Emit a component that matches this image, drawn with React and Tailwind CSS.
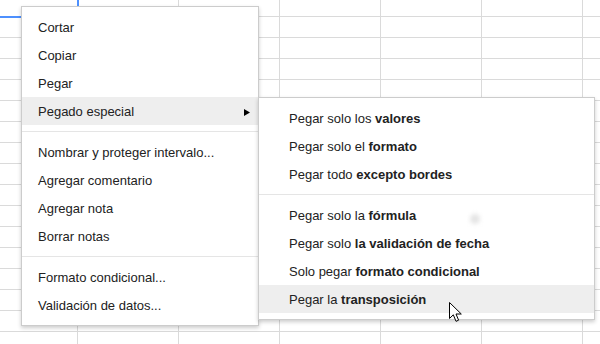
import React from "react";

const rows = 17;
const cols = 7;

function Grid() {
  const rowHeights = Array.from({ length: rows }, (_, i) => (i === 0 ? "h-[17px]" : "h-[21px]"));
  return (
    <div className="flex flex-col">
      {rowHeights.map((h, r) => (
        <div key={r} className={`flex ${h}`}>
          {Array.from({ length: cols }, (_, c) => (
            <div
              key={c}
              className={`${c === 0 ? "w-[78px]" : "w-[101px]"} shrink-0 h-full border-r border-b border-[#dadada]`}
            />
          ))}
        </div>
      ))}
    </div>
  );
}

function Item({ children, active, arrow, pl = "pl-[16px]" }) {
  return (
    <div
      className={`relative h-[28px] flex items-center pt-[2px] ${pl} ${active ? "bg-[#eeeeee]" : ""}`}
    >
      <span>{children}</span>
      {arrow && (
        <svg className="absolute right-[8px] top-[12px]" width="6" height="7" viewBox="0 0 6 7">
          <polygon points="0,0 6,3.5 0,7" fill="#000" />
        </svg>
      )}
    </div>
  );
}

function Sep() {
  return <div className="my-[6px] border-t border-[#e5e5e5]" />;
}

export default function App() {
  return (
    <div
      className="relative w-[600px] h-[344px] overflow-hidden bg-white text-[13px] text-[#222222]"
      style={{ fontFamily: '"Liberation Sans", Arial, sans-serif' }}
    >
      <Grid />
      <div className="absolute left-0 top-0 w-[79px] h-[18px] border-r-2 border-b-2 border-[#4d90fe]" />

      {/* main context menu */}
      <div className="absolute left-[21px] top-[6px] w-[238px] py-[6px] bg-white border border-[#cccccc] shadow-[0_2px_4px_rgba(0,0,0,0.2)]">
        <Item>Cortar</Item>
        <Item>Copiar</Item>
        <Item>Pegar</Item>
        <Item active arrow>Pegado especial</Item>
        <Sep />
        <Item>Nombrar y proteger intervalo...</Item>
        <Item>Agregar comentario</Item>
        <Item>Agregar nota</Item>
        <Item>Borrar notas</Item>
        <Sep />
        <Item>Formato condicional...</Item>
        <Item>Validación de datos...</Item>
      </div>

      {/* submenu */}
      <div className="absolute left-[258px] top-[97px] w-[337px] py-[6px] bg-white border border-[#cccccc] shadow-[0_2px_4px_rgba(0,0,0,0.2)]">
        <Item pl="pl-[30px]">Pegar solo los <b className="font-bold">valores</b></Item>
        <Item pl="pl-[30px]">Pegar solo el <b className="font-bold">formato</b></Item>
        <Item pl="pl-[30px]">Pegar todo <b className="font-bold">excepto bordes</b></Item>
        <Sep />
        <Item pl="pl-[30px]">Pegar solo la <b className="font-bold">fórmula</b></Item>
        <Item pl="pl-[30px]">Pegar solo <b className="font-bold">la validación de fecha</b></Item>
        <Item pl="pl-[30px]">Solo pegar <b className="font-bold">formato condicional</b></Item>
        <Item pl="pl-[30px]" active>Pegar la <b className="font-bold">transposición</b></Item>
      </div>

      {/* faint blob */}
      <div className="absolute left-[470px] top-[214px] w-[10px] h-[10px] rounded-full bg-[#e4e4e4] blur-[2px]" />

      {/* mouse cursor */}
      <svg className="absolute left-[449px] top-[302px]" width="14" height="21" viewBox="0 0 14 21">
        <path
          d="M0.5 0.5 L0.5 16.5 L4.3 12.8 L7 19.3 L9.6 18.2 L7 12 L12.3 12 Z"
          fill="#ffffff"
          stroke="#000000"
          strokeWidth="1"
          strokeLinejoin="miter"
        />
      </svg>
    </div>
  );
}
